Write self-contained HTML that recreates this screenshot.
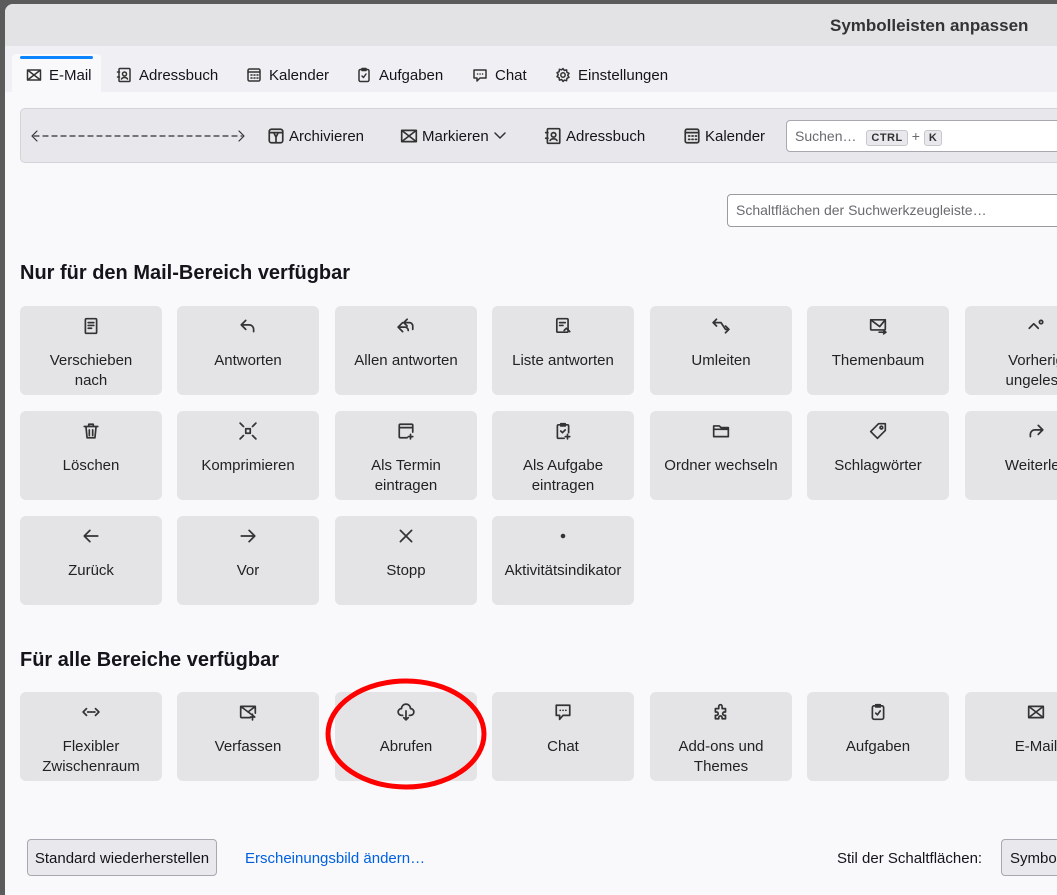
<!DOCTYPE html>
<html><head><meta charset="utf-8"><style>
*{box-sizing:border-box;margin:0;padding:0}
body{width:1057px;height:895px;overflow:hidden;background:#5b5b5b;font-family:"Liberation Sans",sans-serif;color:#15141a;position:relative}
.win{position:absolute;left:5px;top:4px;right:-10px;bottom:0;background:#f9f9fb;border-top-left-radius:8px;overflow:hidden}
.title{position:absolute;left:0;top:0;right:0;height:42px;background:#e3e3e6;}
.title span{position:absolute;left:825px;top:12px;font-size:17px;font-weight:bold;color:#333}
.tabs{position:absolute;left:0;top:42px;right:0;height:46px;background:#f0f0f4}
.tab{position:absolute;top:8px;height:38px;font-size:15px;display:flex;align-items:center;gap:7px;padding-top:4px}
.tab.act{background:#f9f9fb;border-radius:4px 4px 0 0;left:7px;width:89px;padding-left:14px}
.tab.act:before{content:"";position:absolute;left:8px;right:8px;top:2px;height:3px;background:#0a84ff;border-radius:2px}
svg{stroke:#333;fill:none;stroke-width:1.5;stroke-linecap:round;stroke-linejoin:round}
.tb{position:absolute;left:15px;top:104px;width:1060px;height:55px;background:#e8e8ec;border:1px solid #d4d4d8;border-radius:5px}
.tbi{position:absolute;top:18px;font-size:15px;display:flex;align-items:center;gap:4px}
.srch{position:absolute;left:765px;top:11px;width:300px;height:32px;background:#fff;border:1px solid #a8a8b0;border-radius:4px;font-size:14px;color:#6a6a70;padding:7px 8px}
.kbd{display:inline-block;font-size:11px;font-weight:bold;background:#e9e9ed;border:1px solid #c8c8cc;border-radius:3px;padding:0 4px;line-height:14px;color:#333;margin:0 4px;letter-spacing:.5px}
.filter{position:absolute;left:722px;top:190px;width:340px;height:33px;border:1px solid #9a9aa0;border-radius:4px;background:#fff;font-size:14px;color:#6a6a70;padding:7px 8px}
h2{position:absolute;left:15px;font-size:20px;font-weight:bold}
.c{position:absolute;width:142px;height:89px;background:#e4e4e7;border-radius:6px;text-align:center;font-size:15px;line-height:20px;color:#222}
.c svg{position:absolute;left:62px;top:11px;width:18px;height:18px}
.c div{position:absolute;left:0;right:0;top:45px}
.btn{position:absolute;left:27px;top:839px;width:190px;height:37px;background:#e9e9ed;border:1px solid #a8a8b0;border-radius:4px;font-size:15px;padding-top:10px;text-align:center}
.link{position:absolute;left:245px;top:850px;color:#0061e0;font-size:15px}
</style></head><body>
<div class="win">
<div class="title"><span>Symbolleisten anpassen</span></div>
<div class="tabs">
<div class="tab act"><svg width="16" height="16" viewBox="0 0 16 16"><rect x="1.5" y="3" width="13" height="10" rx="1"/><path d="M1.5 3l13 10M14.5 3l-13 10"/></svg>E-Mail</div>
<div class="tab" style="left:111px"><svg width="16" height="16" viewBox="0 0 16 16"><rect x="3" y="1.5" width="11" height="13" rx="1"/><circle cx="8.5" cy="7" r="2"/><path d="M5.5 12c1-2 5-2 6 0M1.5 5h2M1.5 10h2"/></svg>Adressbuch</div>
<div class="tab" style="left:241px"><svg width="16" height="16" viewBox="0 0 16 16"><rect x="2" y="2" width="12" height="12" rx="1.5"/><path d="M2 5h12M5 8h1M8 8h1M11 8h1M5 11h1M8 11h1M11 11h1"/></svg>Kalender</div>
<div class="tab" style="left:351px"><svg width="16" height="16" viewBox="0 0 16 16"><rect x="3" y="2.5" width="10" height="12" rx="1.5"/><path d="M6 1.5h4v2H6zM6 9l1.5 1.5L10 7"/></svg>Aufgaben</div>
<div class="tab" style="left:467px"><svg width="16" height="16" viewBox="0 0 16 16"><path d="M2 3h12v8H8l-3 3v-3H2z"/><path d="M5.5 7h.1M8 7h.1M10.5 7h.1"/></svg>Chat</div>
<div class="tab" style="left:550px"><svg width="16" height="16" viewBox="0 0 16 16"><circle cx="8" cy="8" r="2.2"/><path d="M8 1.5l1.3 2 2.3-.6.3 2.4 2.1 1-1.3 2 1.3 2-2.1 1-.3 2.4-2.3-.6L8 14.5l-1.3-2-2.3.6-.3-2.4-2.1-1 1.3-2-1.3-2 2.1-1 .3-2.4 2.3.6z"/></svg>Einstellungen</div>
</div>
<div class="tb">
<svg style="position:absolute;left:10px;top:20px;stroke-width:1.2" width="214" height="14" viewBox="0 0 214 14"><path d="M6 2L1 7l5 5M208 2l5 5-5 5" /><path d="M3 7h208" stroke-dasharray="5 4"/></svg>
<div class="tbi" style="left:246px"><svg width="18" height="18" viewBox="0 0 16 16"><rect x="2" y="2" width="12" height="12" rx="2"/><path d="M2 5h12M6 5l2 4 2-4M8 9v5"/></svg>Archivieren</div>
<div class="tbi" style="left:379px"><svg width="18" height="18" viewBox="0 0 16 16"><rect x="1.5" y="3" width="13" height="10" rx="1"/><path d="M1.5 3l13 10M14.5 3l-13 10"/></svg>Markieren <svg width="14" height="14" viewBox="0 0 14 14"><path d="M2 4l5 5 5-5"/></svg></div>
<div class="tbi" style="left:523px"><svg width="18" height="18" viewBox="0 0 16 16"><rect x="3" y="1.5" width="11" height="13" rx="1"/><circle cx="8.5" cy="7" r="2"/><path d="M5.5 12c1-2 5-2 6 0M1.5 5h2M1.5 10h2"/></svg>Adressbuch</div>
<div class="tbi" style="left:662px"><svg width="18" height="18" viewBox="0 0 16 16"><rect x="2" y="2" width="12" height="12" rx="1.5"/><path d="M2 5h12M5 8h1M8 8h1M11 8h1M5 11h1M8 11h1M11 11h1"/></svg>Kalender</div>
<div class="srch">Suchen… <span class="kbd" style="margin-left:6px">CTRL</span>+<span class="kbd">K</span></div>
</div>
<div class="filter">Schaltflächen der Suchwerkzeugleiste…</div>
<h2 style="top:258px">Nur für den Mail-Bereich verfügbar</h2>
<h2 style="top:645px">Für alle Bereiche verfügbar</h2>
</div>

<div class="c" style="left:20px;top:306px"><svg viewBox="0 0 16 16"><rect x="3" y="1.5" width="10" height="13" rx="1"/><path d="M5.5 5h5M5.5 7.5h5M5.5 10h3"/></svg><div>Verschieben<br>nach</div></div>
<div class="c" style="left:177px;top:306px"><svg viewBox="0 0 16 16"><path d="M6 3L2 7l4 4M2 7h7a4 4 0 0 1 4 4v2"/></svg><div>Antworten</div></div>
<div class="c" style="left:335px;top:306px"><svg viewBox="0 0 16 16"><path d="M5 5L1 9l4 4M1 9h6a3 3 0 0 1 3 3M9 2L6 5l3 3M6 5h5a3 3 0 0 1 3 3v3"/></svg><div>Allen antworten</div></div>
<div class="c" style="left:492px;top:306px"><svg viewBox="0 0 16 16"><rect x="2.5" y="1.5" width="10" height="12" rx="1"/><path d="M5 5h5M5 7.5h3M9 12l2-2 3 3"/></svg><div>Liste antworten</div></div>
<div class="c" style="left:650px;top:306px"><svg viewBox="0 0 16 16"><path d="M4 2L1 5l3 3M1 5h7l4 6h3M12 8l3 3-3 3"/></svg><div>Umleiten</div></div>
<div class="c" style="left:807px;top:306px"><svg viewBox="0 0 16 16"><rect x="1.5" y="2.5" width="13" height="9" rx="1"/><path d="M1.5 2.5l8 6 5-6M9 13.5h6M13 12l2 1.5-2 1.5"/></svg><div>Themenbaum</div></div>
<div class="c" style="left:965px;top:306px"><svg viewBox="0 0 16 16"><path d="M2 10l4-4 4 4"/><circle cx="12.5" cy="4.5" r="1.5"/></svg><div>Vorherig<br>ungelese</div></div>

<div class="c" style="left:20px;top:411px"><svg viewBox="0 0 16 16"><path d="M2 4h12M6 4V2h4v2M3.5 4l1 10h7l1-10M6.5 7v5M9.5 7v5"/></svg><div>Löschen</div></div>
<div class="c" style="left:177px;top:411px"><svg viewBox="0 0 16 16"><rect x="6" y="6" width="4" height="4"/><path d="M1 1l3 3M15 1l-3 3M1 15l3-3M15 15l-3-3"/></svg><div>Komprimieren</div></div>
<div class="c" style="left:335px;top:411px"><svg viewBox="0 0 16 16"><path d="M9 14H3a1 1 0 0 1-1-1V3a1 1 0 0 1 1-1h10a1 1 0 0 1 1 1v6M2 5h12M12 11v4M10 13h4"/></svg><div>Als Termin<br>eintragen</div></div>
<div class="c" style="left:492px;top:411px"><svg viewBox="0 0 16 16"><path d="M9 14.5H4a1 1 0 0 1-1-1v-10a1 1 0 0 1 1-1h8a1 1 0 0 1 1 1v6M6 1.5h4v2H6zM12 11v4M10 13h4M6 8l1.5 1.5L10 7"/></svg><div>Als Aufgabe<br>eintragen</div></div>
<div class="c" style="left:650px;top:411px"><svg viewBox="0 0 16 16"><path d="M1.5 3.5h5l1.5 1.5h6.5v8h-13z"/><path d="M1.5 6.5h13"/></svg><div>Ordner wechseln</div></div>
<div class="c" style="left:807px;top:411px"><svg viewBox="0 0 16 16"><path d="M8.5 1.5h6v6l-7 7-6-6z"/><circle cx="11" cy="5" r="1.2"/></svg><div>Schlagwörter</div></div>
<div class="c" style="left:965px;top:411px"><svg viewBox="0 0 16 16"><path d="M10 3l4 4-4 4M14 7H7a4 4 0 0 0-4 4v2"/></svg><div>Weiterleit</div></div>

<div class="c" style="left:20px;top:516px"><svg viewBox="0 0 16 16"><path d="M7 3L2 8l5 5M2 8h12"/></svg><div>Zurück</div></div>
<div class="c" style="left:177px;top:516px"><svg viewBox="0 0 16 16"><path d="M9 3l5 5-5 5M2 8h12"/></svg><div>Vor</div></div>
<div class="c" style="left:335px;top:516px"><svg viewBox="0 0 16 16"><path d="M3 3l10 10M13 3L3 13"/></svg><div>Stopp</div></div>
<div class="c" style="left:492px;top:516px"><svg viewBox="0 0 16 16"><circle cx="8" cy="8" r="1.3" fill="#333"/></svg><div>Aktivitätsindikator</div></div>

<div class="c" style="left:20px;top:692px"><svg viewBox="0 0 16 16"><path d="M4 5L1 8l3 3M12 5l3 3-3 3M5 8h1.5M7.5 8H9M10 8h1.5"/></svg><div>Flexibler<br>Zwischenraum</div></div>
<div class="c" style="left:177px;top:692px"><svg viewBox="0 0 16 16"><path d="M10 13H2.5a1 1 0 0 1-1-1V4a1 1 0 0 1 1-1h11a1 1 0 0 1 1 1v5M1.5 3l12 9M14.5 3L8 8M12 10v5M10 12.5h4"/></svg><div>Verfassen</div></div>
<div class="c" style="left:335px;top:692px"><svg viewBox="0 0 16 16"><path d="M5 11H4a3 3 0 0 1 0-6 4 4 0 0 1 8 0 3 3 0 0 1 0 6h-1M8 7v8M6 13l2 2 2-2"/></svg><div>Abrufen</div></div>
<div class="c" style="left:492px;top:692px"><svg viewBox="0 0 16 16"><path d="M2 2h12v9H8l-3 3.5V11H2z"/><path d="M5.5 6.5h.1M8 6.5h.1M10.5 6.5h.1"/></svg><div>Chat</div></div>
<div class="c" style="left:650px;top:692px"><svg viewBox="0 0 16 16"><path d="M3 5h3V3a1.5 1.5 0 0 1 3 0v2h3v3h-1a1.5 1.5 0 0 0 0 3h1v3H9v-1a1.5 1.5 0 0 0-3 0v1H3v-3h1a1.5 1.5 0 0 0 0-3H3z"/></svg><div>Add-ons und<br>Themes</div></div>
<div class="c" style="left:807px;top:692px"><svg viewBox="0 0 16 16"><rect x="3" y="2.5" width="10" height="12" rx="1.5"/><path d="M6 1.5h4v2H6zM6 9l1.5 1.5L10 7"/></svg><div>Aufgaben</div></div>
<div class="c" style="left:965px;top:692px"><svg viewBox="0 0 16 16"><rect x="1.5" y="3" width="13" height="10" rx="1"/><path d="M1.5 3l13 10M14.5 3l-13 10"/></svg><div>E-Mail</div></div>

<svg style="position:absolute;left:324px;top:678px;stroke:#f00;stroke-width:5" width="170" height="114"><ellipse cx="82" cy="56" rx="78" ry="53"/></svg>

<div class="btn">Standard wiederherstellen</div>
<div class="link">Erscheinungsbild ändern…</div>
<div style="position:absolute;left:837px;top:850px;font-size:15px">Stil der Schaltflächen:</div>
<div style="position:absolute;left:1001px;top:839px;width:80px;height:37px;background:#e9e9ed;border:1px solid #a8a8b0;border-radius:4px;font-size:15px;padding:10px 0 0 8px">Symbole</div>
</body></html>
